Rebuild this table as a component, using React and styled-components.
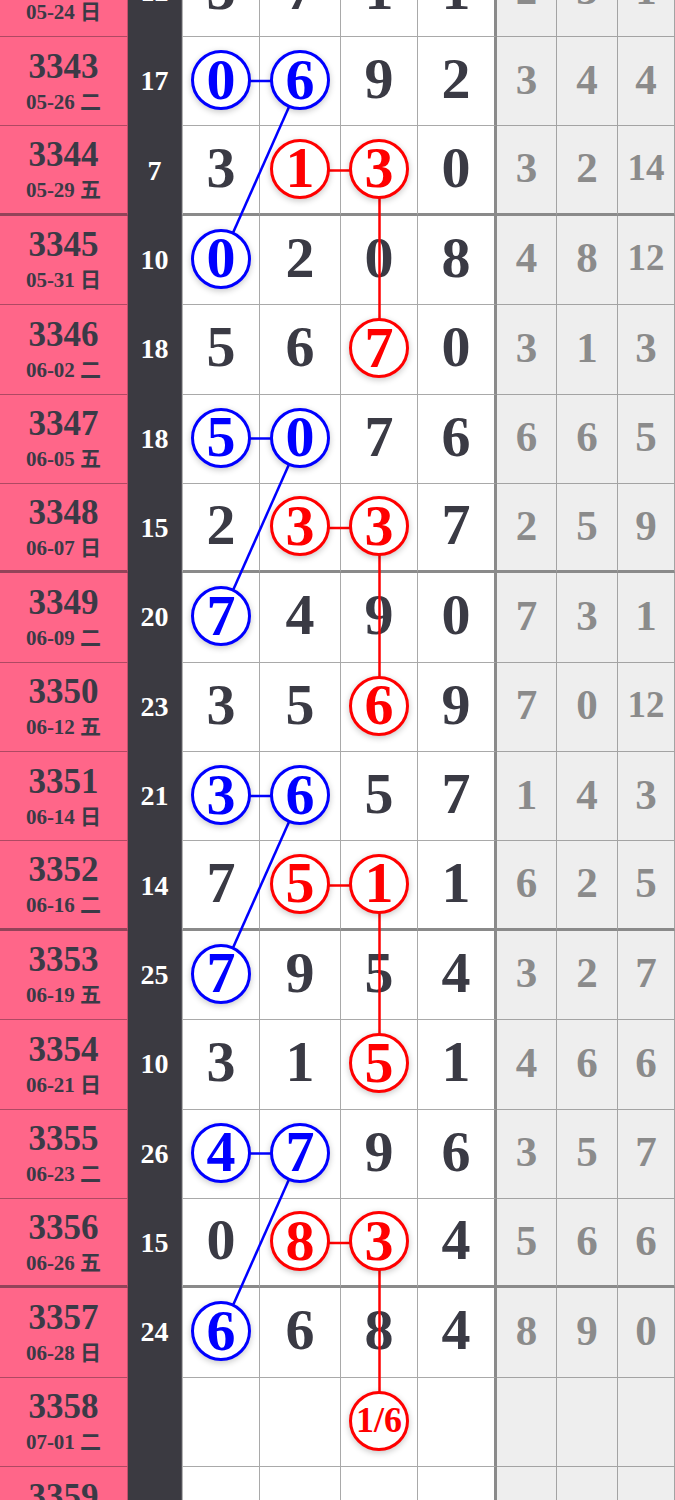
import React from "react";
import styled, { createGlobalStyle } from "styled-components";

const H = 89.375;
const COLS = [128, 54, 78, 81, 77, 79, 60, 61, 57];
const CX = [221, 300.5, 379.5, 456];
const SERIF = `"Liberation Serif", "Noto Sans CJK SC", serif`;

const Global = createGlobalStyle`
  html, body { margin: 0; padding: 0; background: #ffffff; }
  body { overflow: hidden; font-family: ${SERIF}; }
`;

const rows = [
  { no: "3342", date: "05-24 日", d: [3, 7, 1, 1], g: [2, 3, 1] },
  { no: "3343", date: "05-26 二", d: [0, 6, 9, 2], g: [3, 4, 4], m: { 0: "b", 1: "b" } },
  { no: "3344", date: "05-29 五", d: [3, 1, 3, 0], g: [3, 2, 14], m: { 1: "r", 2: "r" }, thick: true },
  { no: "3345", date: "05-31 日", d: [0, 2, 0, 8], g: [4, 8, 12], m: { 0: "b" } },
  { no: "3346", date: "06-02 二", d: [5, 6, 7, 0], g: [3, 1, 3], m: { 2: "r" } },
  { no: "3347", date: "06-05 五", d: [5, 0, 7, 6], g: [6, 6, 5], m: { 0: "b", 1: "b" } },
  { no: "3348", date: "06-07 日", d: [2, 3, 3, 7], g: [2, 5, 9], m: { 1: "r", 2: "r" }, thick: true },
  { no: "3349", date: "06-09 二", d: [7, 4, 9, 0], g: [7, 3, 1], m: { 0: "b" } },
  { no: "3350", date: "06-12 五", d: [3, 5, 6, 9], g: [7, 0, 12], m: { 2: "r" } },
  { no: "3351", date: "06-14 日", d: [3, 6, 5, 7], g: [1, 4, 3], m: { 0: "b", 1: "b" } },
  { no: "3352", date: "06-16 二", d: [7, 5, 1, 1], g: [6, 2, 5], m: { 1: "r", 2: "r" }, thick: true },
  { no: "3353", date: "06-19 五", d: [7, 9, 5, 4], g: [3, 2, 7], m: { 0: "b" } },
  { no: "3354", date: "06-21 日", d: [3, 1, 5, 1], g: [4, 6, 6], m: { 2: "r" } },
  { no: "3355", date: "06-23 二", d: [4, 7, 9, 6], g: [3, 5, 7], m: { 0: "b", 1: "b" } },
  { no: "3356", date: "06-26 五", d: [0, 8, 3, 4], g: [5, 6, 6], m: { 1: "r", 2: "r" }, thick: true },
  { no: "3357", date: "06-28 日", d: [6, 6, 8, 4], g: [8, 9, 0], m: { 0: "b" } },
  { no: "3358", date: "07-01 二", d: [null, null, "1/6", null], g: [null, null, null], m: { 2: "r" }, empty: true },
  { no: "3359", date: "07-03 五", d: [null, null, null, null], g: [null, null, null], empty: true },
];

const BLUE = "#0000ff";
const RED = "#ff0000";

const Page = styled.div`
  width: 675px;
  height: 1500px;
  overflow: hidden;
`;

const Table = styled.div`
  position: relative;
  width: 675px;
  margin-top: -52.375px;
`;

const Row = styled.div`
  display: grid;
  grid-template-columns: ${COLS.map((c) => c + "px").join(" ")};
  height: ${H}px;
`;

const IssueCell = styled.div`
  box-sizing: border-box;
  background: #ff6689;
  border-bottom: ${(p) => (p.$thick ? "3px solid rgba(60,40,50,0.55)" : "1px solid rgba(80,40,55,0.45)")};
  border-right: 1px solid rgba(80,40,55,0.35);
  display: flex;
  flex-direction: column;
  align-items: center;
  justify-content: center;
  color: #3b3a46;
  font-weight: bold;
`;

const IssueNo = styled.div`
  font-size: 35px;
  line-height: 38px;
`;

const IssueDate = styled.div`
  font-size: 21px;
  line-height: 26px;
  margin-top: 3px;
  white-space: nowrap;
`;

const SumCell = styled.div`
  box-sizing: border-box;
  background: #3b3a41;
  border-right: 1px solid #55545b;
  color: #ffffff;
  font-weight: bold;
  font-size: 28px;
  display: flex;
  align-items: center;
  justify-content: center;
  padding-bottom: 1px;
`;

const DigitCell = styled.div`
  box-sizing: border-box;
  background: #ffffff;
  border-bottom: ${(p) => (p.$thick ? "3px solid #8a8a8a" : "1px solid #a9a9a9")};
  border-right: ${(p) => (p.$last ? "3px solid #8a8a8a" : "1px solid #a9a9a9")};
  border-left: ${(p) => (p.$first ? "1px solid #b5b5b5" : "none")};
  display: flex;
  align-items: center;
  justify-content: center;
  padding-bottom: 4px;
  color: #3a3a44;
  font-weight: bold;
  font-size: 58px;
  line-height: 1;
`;

const Ball = styled.div`
  position: relative;
  z-index: 2;
  box-sizing: border-box;
  width: 60px;
  height: 60px;
  border-radius: 50%;
  background: #ffffff;
  border: 3px solid ${(p) => p.$color};
  color: ${(p) => p.$color};
  box-shadow: 0 2px 6px rgba(0, 0, 0, 0.22);
  display: flex;
  align-items: center;
  justify-content: center;
  font-size: ${(p) => (p.$small ? "36px" : "58px")};
  line-height: 1;
  padding-bottom: 1px;
  margin-top: 2px;
`;

const MissCell = styled.div`
  box-sizing: border-box;
  background: #eeeeee;
  border-bottom: ${(p) => (p.$thick ? "3px solid #8a8a8a" : "1px solid #a3a3a3")};
  border-right: 1px solid #a3a3a3;
  display: flex;
  align-items: center;
  justify-content: center;
  padding-bottom: 4px;
  color: #8b8b8b;
  font-weight: bold;
  font-size: ${(p) => (p.$two ? "37px" : "43px")};
  line-height: 1;
`;

const Overlay = styled.svg`
  position: absolute;
  left: 0;
  top: 0;
  z-index: 1;
  pointer-events: none;
`;

const cy = (i) => i * H + H / 2 - 1;

function buildLines() {
  const lines = [];
  const starts = [1, 5, 9, 13];
  starts.forEach((r) => {
    lines.push({ x1: CX[0], y1: cy(r), x2: CX[1], y2: cy(r), c: BLUE });
    lines.push({ x1: CX[1], y1: cy(r + 1), x2: CX[2], y2: cy(r + 1), c: RED });
    lines.push({ x1: CX[1], y1: cy(r), x2: CX[0], y2: cy(r + 2), c: BLUE });
    lines.push({ x1: CX[2], y1: cy(r + 1), x2: CX[2], y2: cy(r + 3), c: RED });
  });
  return lines;
}

export default function App() {
  const lines = buildLines();
  const total = rows.length * H;
  return (
    <Page>
      <Global />
      <Table>
        {rows.map((r) => {
          const sum = r.empty ? "" : r.d.reduce((a, b) => a + b, 0);
          return (
            <Row key={r.no}>
              <IssueCell $thick={r.thick}>
                <IssueNo>{r.no}</IssueNo>
                <IssueDate>{r.date}</IssueDate>
              </IssueCell>
              <SumCell>{sum}</SumCell>
              {r.d.map((v, ci) => {
                const mark = r.m && r.m[ci];
                return (
                  <DigitCell key={ci} $thick={r.thick} $first={ci === 0} $last={ci === 3}>
                    {mark ? (
                      <Ball $color={mark === "b" ? BLUE : RED} $small={String(v).length > 1}>
                        {v}
                      </Ball>
                    ) : (
                      v
                    )}
                  </DigitCell>
                );
              })}
              {r.g.map((v, gi) => (
                <MissCell key={gi} $thick={r.thick} $two={v !== null && String(v).length > 1}>
                  {v}
                </MissCell>
              ))}
            </Row>
          );
        })}
        <Overlay width="675" height={total} viewBox={`0 0 675 ${total}`}>
          {lines.map((l, i) => (
            <line key={i} x1={l.x1} y1={l.y1} x2={l.x2} y2={l.y2} stroke={l.c} strokeWidth="2.5" />
          ))}
        </Overlay>
      </Table>
    </Page>
  );
}
